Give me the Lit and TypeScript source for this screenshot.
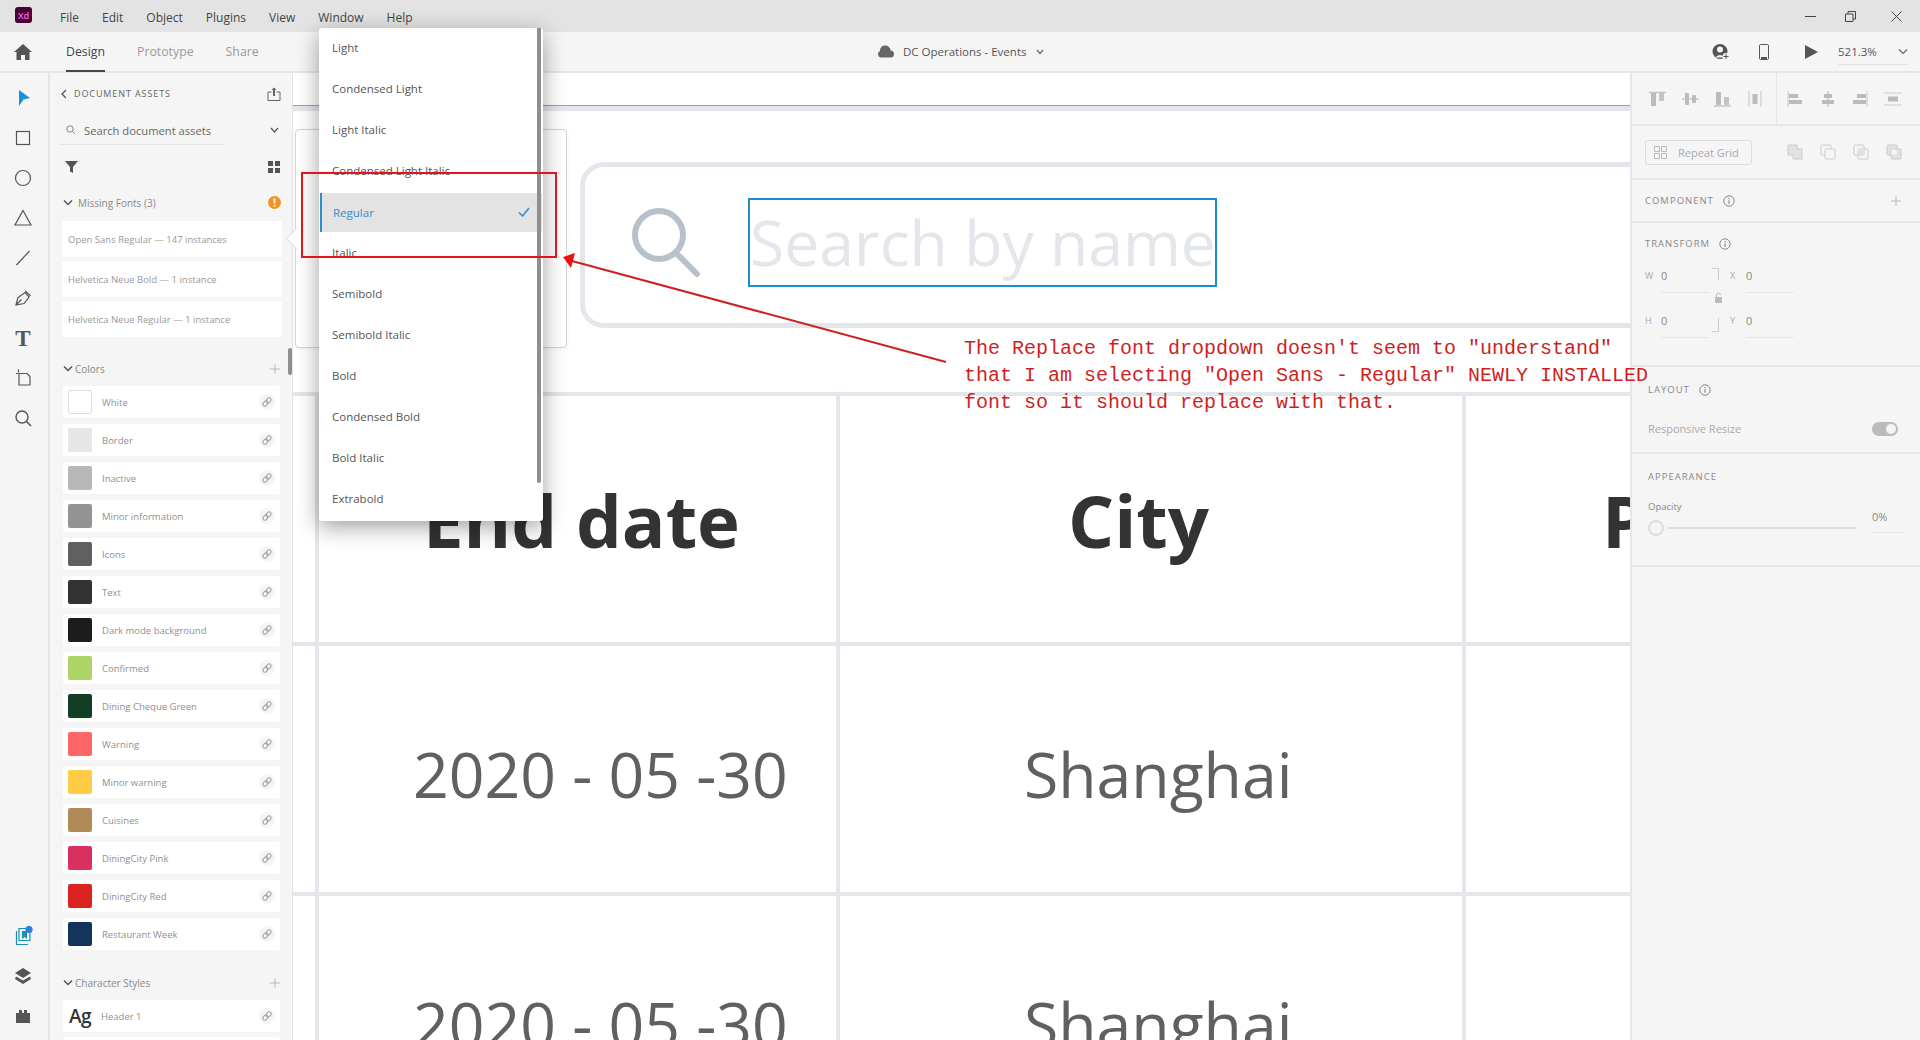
import { LitElement, html, svg, css } from "lit";
import { customElement } from "lit/decorators.js";

const I = (w: number, h: number, body: unknown) => html`<svg width=${w} height=${h} viewBox="0 0 ${w} ${h}" style="display:block;flex:none">${body}</svg>`;
const s = "fill:none;stroke:#555;stroke-width:1.2";

const colors: [string, string][] = [
  ["White", "#ffffff"], ["Border", "#e6e6e6"], ["Inactive", "#b8b8b8"], ["Minor information", "#949494"],
  ["Icons", "#606060"], ["Text", "#333333"], ["Dark mode background", "#1c1c1c"], ["Confirmed", "#aed468"],
  ["Dining Cheque Green", "#123e26"], ["Warning", "#ff6666"], ["Minor warning", "#ffcc47"], ["Cuisines", "#b08a56"],
  ["DiningCity Pink", "#d9305f"], ["DiningCity Red", "#dd2222"], ["Restaurant Week", "#12355b"],
];
const menu = ["File", "Edit", "Object", "Plugins", "View", "Window", "Help"];
const fonts = ["Open Sans Regular — 147 instances", "Helvetica Neue Bold — 1 instance", "Helvetica Neue Regular — 1 instance"];
const drop = ["Light", "Condensed Light", "Light Italic", "Condensed Light Italic", "Regular", "Italic", "Semibold", "Semibold Italic", "Bold", "Condensed Bold", "Bold Italic", "Extrabold"];

const link = html`<span class="link">${I(12, 12, svg`<g fill="none" stroke="#a2a2a2" stroke-width="1.100" transform="rotate(-45 6 6)"><rect x="1" y="4" width="5.500" height="4" rx="2"/><rect x="5.500" y="4" width="5.500" height="4" rx="2"/></g>`)}</span>`;
const chev = html`<span class="chev">${I(10, 8, svg`<path d="M1 1.500 5 5.500 9 1.500" fill="none" stroke="#555" stroke-width="1.500"/>`)}</span>`;
const plus = html`<span class="plus">${I(12, 12, svg`<path d="M6 1v10M1 6h10" stroke="#bbb" stroke-width="1.100"/>`)}</span>`;
const info = html`<span class="info">${I(12, 12, svg`<circle cx="6" cy="6" r="5.200" fill="none" stroke="#888" stroke-width="1"/><path d="M6 5.200v3.600M6 3v1.200" stroke="#888" stroke-width="1.200"/>`)}</span>`;

const railTop = [
  I(20, 20, svg`<path d="M6 2 17 10 10.500 11.500 6 18Z" fill="#1b8fd8"/>`),
  I(20, 20, svg`<rect x="3.500" y="3.500" width="13" height="13" style=${s}/>`),
  I(20, 20, svg`<circle cx="10" cy="10" r="7.500" style=${s}/>`),
  I(20, 20, svg`<path d="M10 2.500 18 17H2Z" style=${s}/>`),
  I(20, 20, svg`<path d="M3.500 17 16.500 3" style=${s}/>`),
  I(20, 20, svg`<path d="M3 17 5 9.500 12 4.500 16 9 11 15.500ZM3 17 8.500 11.500M12.500 3 17.500 8" style=${s}/>`),
  html`<span class="t">T</span>`,
  I(20, 20, svg`<path d="M6 5.500h8l3 3V17H6ZM3 5.500h2M5.500 1.500v3" style=${s}/>`),
  I(20, 20, svg`<circle cx="9" cy="9" r="6" fill="none" stroke="#555" stroke-width="1.400"/><path d="M13.500 13.500 18 18" stroke="#555" stroke-width="1.600"/>`),
];
const railBottom = [
  I(20, 20, svg`<path d="M6 2.500h11v12H6Z M3.500 5v13.500H15" fill="none" stroke="#1b8fb8" stroke-width="1.200"/><path d="M9 5h5v8l-2.500-2L9 13Z" fill="#1b8fb8"/><circle cx="16" cy="3.500" r="3.600" fill="#2b7fe0"/>`),
  I(20, 20, svg`<path d="M10 2 18 7 10 12 2 7Z" fill="#555"/><path d="M3 10.500 10 14.500 17 10.500 18 13 10 18 2 13Z" fill="#555"/>`),
  I(20, 20, svg`<path d="M3 17V7h3V4h3v3h2V4h3v3h3v10Z" fill="#555"/>`),
];
const alignL = [
  svg`<path d="M1 1.500h17" stroke="#c4c4c4" stroke-width="1.500"/><rect x="3" y="2" width="5" height="13" fill="#bbb"/><rect x="11" y="2" width="5" height="8" fill="#c4c4c4"/>`,
  svg`<path d="M1 8h17" stroke="#c4c4c4" stroke-width="1.500"/><rect x="4" y="2" width="4" height="12" rx="1" fill="#bbb"/><rect x="11" y="4" width="4" height="8" rx="1" fill="#bbb"/>`,
  svg`<path d="M1 15h17" stroke="#c4c4c4" stroke-width="1.500"/><rect x="3" y="1" width="5" height="13" fill="#bbb"/><rect x="11" y="6" width="5" height="8" fill="#c4c4c4"/>`,
  svg`<path d="M3 0v16M15 0v16" stroke="#ccc" stroke-width="1.200"/><rect x="6.500" y="3" width="5" height="10" fill="#bbb"/>`,
];
const alignR = [
  svg`<path d="M2 0v16" stroke="#ccc" stroke-width="1.200"/><rect x="3" y="3" width="9" height="4" fill="#bbb"/><rect x="3" y="9" width="13" height="4" fill="#bbb"/>`,
  svg`<path d="M9 0v16" stroke="#bbb" stroke-width="1.200"/><rect x="5" y="3" width="8" height="4" fill="#bbb"/><rect x="3" y="9" width="12" height="4" fill="#bbb"/>`,
  svg`<path d="M16 0v16" stroke="#ccc" stroke-width="1.200"/><rect x="6" y="3" width="9" height="4" fill="#bbb"/><rect x="2" y="9" width="13" height="4" fill="#bbb"/>`,
  svg`<path d="M0 2h18M0 14h18" stroke="#ccc" stroke-width="1.200"/><rect x="4" y="5.500" width="10" height="5" fill="#bbb"/>`,
];
const bools = [
  svg`<path d="M1 1h9v4h5v10H6v-4H1Z" fill="#e2e2e2" stroke="#ccc"/>`,
  svg`<rect x="1" y="1" width="10" height="10" rx="1" fill="none" stroke="#ccc"/><rect x="5" y="5" width="10" height="10" rx="1" fill="#f5f5f5" stroke="#ccc"/>`,
  svg`<rect x="1" y="1" width="10" height="10" rx="1" fill="none" stroke="#ccc"/><rect x="5" y="5" width="10" height="10" rx="1" fill="none" stroke="#ccc"/><rect x="5" y="5" width="6" height="6" fill="#e2e2e2"/>`,
  svg`<rect x="1" y="1" width="10" height="10" rx="1" fill="#e2e2e2" stroke="#ccc"/><rect x="5" y="5" width="10" height="10" rx="1" fill="#e2e2e2" stroke="#ccc"/><rect x="5.500" y="5.500" width="5" height="5" fill="#f5f5f5"/>`,
];

@customElement("app-root")
export class AppRoot extends LitElement {
  static styles = css`
    :host { display: block; position: relative; width: 1920px; height: 1040px; overflow: hidden; background: #f5f5f5; font-family: "Open Sans", sans-serif; color: #444; }
    .titlebar { height: 32px; background: #e3e3e3; display: flex; align-items: center; padding-left: 15px; }
    .logo { width: 17px; height: 16px; border-radius: 3px; background: #470137; color: #ff61f6; font-size: 9px; font-weight: 600; display: flex; align-items: center; justify-content: center; margin-right: 28px; margin-top: -2px; }
    .menu { display: flex; gap: 23px; font-size: 12px; color: #444; margin-top: 2px; }
    .winctl { margin-left: auto; display: flex; padding-right: 18px; align-items: center; }
    .g1 { width: 29px; } .g2 { width: 35px; }
    .tabbar { height: 39px; background: #f5f5f5; border-bottom: 2px solid #e6e6e6; display: flex; align-items: center; position: relative; box-sizing: content-box; }
    .home { margin-left: 14px; margin-right: 34px; }
    .tab { font-size: 12.300px; color: #999; margin-right: 32px; height: 39px; line-height: 39px; box-sizing: border-box; }
    .tab.on { color: #444; border-bottom: 2px solid #444; margin-top: 2px; line-height: 37px; }
    .doc { position: absolute; left: 877px; top: 0; height: 39px; display: flex; align-items: center; font-size: 11.500px; color: #555; gap: 9px; }
    .tools { margin-left: auto; display: flex; align-items: center; padding-right: 12px; }
    .zoomv { font-size: 11.500px; color: #555; width: 70px; height: 24px; line-height: 22px; border-bottom: 1px solid #e2e2e2; position: relative; box-sizing: border-box; margin-top: 2px; }
    .zoomv .chev { position: absolute; right: 0; top: 7px; }
    .main { display: flex; height: 967px; }
    .rail { width: 50px; border-right: 2px solid #e4e4e4; display: flex; flex-direction: column; padding: 5px 2px 4px 0; box-sizing: border-box; flex: none; }
    .rail .cell { height: 40px; display: flex; align-items: center; justify-content: center; flex: none; }
    .rail .spacer { flex: 1; }
    .t { font-family: "Liberation Serif", serif; font-weight: 700; font-size: 23px; color: #555; line-height: 1; }
    .assets { width: 243px; border-right: 1px solid #e4e4e4; position: relative; padding: 0 0 0 13px; box-sizing: border-box; flex: none; overflow: hidden; }
    .ahead { height: 41px; display: flex; align-items: center; font-size: 9px; letter-spacing: .9px; color: #666; gap: 7px; padding-right: 11px; margin-left: -2px; }
    .ahead .sh { margin-left: auto; }
    .asearch { height: 32px; display: flex; align-items: center; font-size: 11.200px; color: #666; padding: 0 13px 0 3px; position: relative; }
    .asearch .txt { margin-left: 9px; flex: 1; }
    .asearch .u { position: absolute; left: -3px; bottom: 1px; width: 164px; height: 1px; background: #e4e4e4; }
    .afilter { height: 42px; display: flex; align-items: center; justify-content: space-between; padding: 0 12px 0 2px; }
    .sect { display: flex; align-items: center; gap: 5px; font-size: 10px; color: #888; padding-right: 11px; box-sizing: border-box; }
    .sect .end { margin-left: auto; display: flex; }
    .sect .l { margin-left: -3px; }
    .sect.mf { height: 33px; padding-bottom: 4px; }
    .sect.col { height: 49px; padding-top: 15px; }
    .sect.chr { height: 50px; padding-top: 16px; }
    .fonts { display: flex; flex-direction: column; gap: 4px; margin: 0 10px 0 -1px; }
    .frow { height: 36px; background: #fff; border-radius: 2px; font-size: 9.500px; color: #999; display: flex; align-items: center; padding-left: 6px; }
    .rows { display: flex; flex-direction: column; gap: 6px; width: 217px; }
    .crow { height: 32px; flex: none; background: #fff; border-radius: 3px; display: flex; align-items: center; padding: 0 5px; box-sizing: border-box; font-size: 9.500px; color: #909090; }
    .sw { width: 24px; height: 24px; border-radius: 2px; margin-right: 10px; box-sizing: border-box; flex: none; }
    .sw.w { border: 1px solid #ddd; }
    .link { margin-left: auto; width: 16px; height: 16px; border-radius: 50%; background: #f5f5f5; display: flex; align-items: center; justify-content: center; }
    .ag { font-size: 19px; font-weight: 600; color: #333; width: 27px; margin-right: 5px; padding-left: 1px; letter-spacing: -.500px; }
    .thumb { position: absolute; left: 238px; top: 275px; width: 4px; height: 27px; border-radius: 2px; background: #8f8f8f; }
    .canvas { width: 1338px; flex: none; background: #fff; overflow: hidden; }
    .bluel { margin-top: 32px; height: 6px; box-sizing: border-box; border-top: 1.500px solid #7aa7dc; background: #e3e6ea; width: 100%; }
    .sbox { margin: 51px 0 0 287px; width: 1300px; height: 166px; border: 5px solid #e3e6ea; border-radius: 24px; box-sizing: border-box; display: flex; align-items: center; }
    .sglass { margin-left: 47px; margin-top: -4px; }
    .sfield { margin-left: 46px; width: 469px; height: 89px; border: 2px solid #1d8cc9; box-sizing: border-box; font-size: 62.500px; color: #e3e6ea; white-space: nowrap; margin-top: -6px; line-height: 84px; }
    .grid { margin-top: 64px; display: grid; grid-template-columns: 22px 517px 622px 200px; grid-auto-rows: 246px; gap: 4px; background: #e3e6ea; padding-top: 4px; height: 680px; overflow: hidden; }
    .c { background: #fff; display: flex; align-items: center; white-space: nowrap; overflow: hidden; font-size: 62.500px; color: #606060; line-height: 1.2; padding-top: 9px; box-sizing: border-box; }
    .c.b { font-size: 72.500px; font-weight: 700; color: #333; padding-top: 2px; }
    .panel { width: 288px; flex: none; border-left: 2px solid #e6e6e6; margin-left: -1px; box-sizing: content-box; }
    .sec { border-bottom: 2px solid #e6e6e6; box-sizing: content-box; position: relative; }
    .aligns { height: 51px; display: flex; }
    .aligns > div { display: flex; align-items: center; justify-content: space-between; box-sizing: border-box; }
    .aligns > div:first-child { width: 145px; padding: 0 12px 0 16px; border-right: 1px solid #e6e6e6; }
    .aligns > div:last-child { flex: 1; padding: 0 18px 0 9px; }
    .repeat { height: 52px; display: flex; align-items: center; padding: 0 18px 0 13px; }
    .rgbtn { width: 107px; height: 25px; border: 1px solid #ddd; border-radius: 3px; box-sizing: border-box; display: flex; align-items: center; gap: 11px; padding-left: 8px; font-size: 11px; color: #aaa; }
    .blist { margin-left: auto; display: flex; gap: 17px; }
    .lab { font-size: 9.500px; letter-spacing: 1px; color: #888; display: flex; align-items: center; gap: 9px; line-height: 13px; }
    .component { height: 41px; display: flex; align-items: center; padding: 0 18px 0 13px; justify-content: space-between; }
    .transform { height: 144px; padding: 14px 0 0 13px; box-sizing: border-box; }
    .tgrid { margin-top: 11px; display: grid; grid-template-columns: 85px 64px; row-gap: 13px; font-size: 11px; color: #888; position: relative; }
    .f { display: flex; align-items: center; gap: 7px; height: 32px; padding-bottom: 4px; box-sizing: border-box; position: relative; }
    .f b { font-weight: 400; font-size: 9px; color: #aaa; width: 9px; }
    .f::after { content: ""; position: absolute; left: 16px; bottom: 0; height: 1px; background: #e6e6e6; width: 48px; }
    .lock { position: absolute; left: 66px; top: 7px; width: 16px; height: 64px; }
    .layout { height: 87px; padding: 16px 22px 0 16px; box-sizing: border-box; }
    .rr { margin-top: 25px; display: flex; align-items: center; justify-content: space-between; font-size: 11px; color: #aaa; }
    .tog { width: 26px; height: 14px; border-radius: 7px; background: #bbb; position: relative; }
    .tog::after { content: ""; position: absolute; right: 2px; top: 2px; width: 10px; height: 10px; border-radius: 50%; background: #f5f5f5; }
    .appear { height: 113px; padding: 16px 22px 0 16px; box-sizing: border-box; }
    .oplab { font-size: 9.500px; color: #888; margin-top: 17px; line-height: 13px; }
    .oprow { display: flex; align-items: center; margin-top: 4px; height: 22px; position: relative; }
    .knob { width: 16px; height: 16px; border-radius: 50%; border: 2px solid #ddd; box-sizing: border-box; flex: none; margin-right: 4px; background: #f5f5f5; }
    .tr { width: 188px; height: 2px; background: #ddd; flex: none; }
    .op { position: absolute; left: 224px; top: -12px; width: 32px; height: 28px; line-height: 24px; border-bottom: 1px solid #e6e6e6; font-size: 11px; color: #888; box-sizing: border-box; }
    .card { position: absolute; left: 295px; top: 129px; width: 272px; height: 219px; background: #fff; border: 1px solid #d4d4d4; border-radius: 4px; box-sizing: border-box; box-shadow: 0 1px 6px rgba(0,0,0,.05); }
    .caret { position: absolute; left: -7px; top: 101px; width: 14px; height: 14px; background: #fff; border-left: 1px solid #ddd; border-bottom: 1px solid #ddd; transform: rotate(45deg); }
    .dd { position: absolute; left: 319px; top: 28px; width: 224px; height: 493px; background: #fff; border-radius: 3px; box-shadow: 0 6px 22px rgba(0,0,0,.38); overflow: hidden; }
    .di { height: 41px; display: flex; align-items: center; padding: 0 0 3px 13px; font-size: 11.500px; color: #555; position: relative; box-sizing: border-box; }
    .di.sel { color: #2b8fce; background: #e3e3e3; border-left: 2px solid #2b8fce; padding-left: 11px; margin: 1px; height: 39px; padding-bottom: 1px; }
    .di .ck { position: absolute; right: 12px; top: 14px; }
    .ddbar { position: absolute; right: 2px; top: 0; width: 4px; height: 455px; background: #8f8f8f; border-radius: 0 0 2px 2px; }
    .anno { position: absolute; left: 0; top: 0; pointer-events: none; }
    .note { position: absolute; left: 964px; top: 335px; font-family: "Liberation Mono", monospace; font-size: 20px; line-height: 27px; color: #cf1f1f; white-space: pre; }
  `;

  render() {
    const alignRow = (list: unknown[]) => list.map((b) => I(18, 16, b));
    return html`
      <div class="titlebar">
        <div class="logo">Xd</div>
        <div class="menu">${menu.map((m) => html`<span>${m}</span>`)}</div>
        <div class="winctl">
          ${I(11, 11, svg`<path d="M0 5.500h11" stroke="#444"/>`)}
          <span class="g1"></span>
          ${I(11, 11, svg`<path d="M.5 3h7.500v7.500H.5ZM3 3V.5h7.500V8H8" fill="none" stroke="#444"/>`)}
          <span class="g2"></span>
          ${I(11, 11, svg`<path d="M.5.5l10 10M10.500.5l-10 10" stroke="#444"/>`)}
        </div>
      </div>
      <div class="tabbar">
        <div class="home">${I(18, 16, svg`<path d="M9 0 18 8h-2.500v8h-4.500v-5H7v5H2.500V8H0Z" fill="#555"/>`)}</div>
        <div class="tab on">Design</div><div class="tab">Prototype</div><div class="tab">Share</div>
        <div class="doc">
          ${I(17, 13, svg`<path d="M3.500 12.500A3.500 3.500 0 0 1 3 6 5 5 0 0 1 8.500.5 5 5 0 0 1 13.500 5.500 3.500 3.500 0 0 1 13.500 12.500Z" fill="#666"/>`)}
          <span>DC Operations - Events</span>
          ${I(10, 8, svg`<path d="M2 2 5 5.500 8 2" fill="none" stroke="#666" stroke-width="1.200"/>`)}
        </div>
        <div class="tools">
          ${I(18, 16, svg`<circle cx="8" cy="7.500" r="7.500" fill="#555"/><circle cx="8" cy="5.500" r="3" fill="#f5f5f5"/><path d="M3.500 13.500a5 4.500 0 0 1 9 0Z" fill="#f5f5f5"/><circle cx="14" cy="12.500" r="3.500" fill="#f5f5f5"/><path d="M11.500 12.500h5M14 10v5" stroke="#555"/>`)}
          <span style="width:29px"></span>
          ${I(10, 16, svg`<rect x=".5" y=".5" width="9" height="15" rx="1" fill="#f5f5f5" stroke="#555"/><rect x="2" y="13" width="6" height="2" fill="#555"/>`)}
          <span style="width:36px"></span>
          ${I(13, 14, svg`<path d="M0 0 13 7 0 14Z" fill="#555"/>`)}
          <span style="width:20px"></span>
          <div class="zoomv">521.3%<span class="chev">${I(10, 8, svg`<path d="M1 1.500 5 5.500 9 1.500" fill="none" stroke="#666" stroke-width="1.200"/>`)}</span></div>
        </div>
      </div>
      <div class="main">
        <div class="rail">
          ${railTop.map((i) => html`<div class="cell">${i}</div>`)}
          <div class="spacer"></div>
          ${railBottom.map((i) => html`<div class="cell">${i}</div>`)}
        </div>
        <div class="assets">
          <div class="ahead">
            ${I(6, 10, svg`<path d="M5 1 1 5l4 4" fill="none" stroke="#555" stroke-width="1.300"/>`)}
            <span>DOCUMENT ASSETS</span>
            <span class="sh">${I(14, 14, svg`<path d="M1 5v8.500h12V5M1 5h3.500M13 5H9.500" fill="none" stroke="#666"/><path d="M4.500 3 7 .5 9.500 3Z" fill="#666"/><rect x="6" y="3" width="2" height="6" fill="#666"/>`)}</span>
          </div>
          <div class="asearch">
            ${I(9, 10, svg`<circle cx="4" cy="4" r="3.200" fill="none" stroke="#888"/><path d="M6.500 6.500 9 9" stroke="#888"/>`)}
            <span class="txt">Search document assets</span>
            ${I(9, 7, svg`<path d="M1 1 4.500 5 8 1" fill="none" stroke="#555" stroke-width="1.200"/>`)}
            <div class="u"></div>
          </div>
          <div class="afilter">
            ${I(13, 12, svg`<path d="M0 0h13L8 6v6L5 10.500V6Z" fill="#555"/>`)}
            ${I(12, 12, svg`<path d="M0 0h5v5H0ZM7 0h5v5H7ZM0 7h5v5H0ZM7 7h5v5H7Z" fill="#555"/>`)}
          </div>
          <div class="sect mf">${chev}<span>Missing Fonts (3)</span>
            <span class="end">${I(13, 13, svg`<circle cx="6.500" cy="6.500" r="6.500" fill="#f29423"/><path d="M6.500 2.500v5M6.500 9v1.500" stroke="#fff" stroke-width="1.800"/>`)}</span></div>
          <div class="fonts">${fonts.map((f) => html`<div class="frow">${f}</div>`)}</div>
          <div class="sect col">${chev}<span class="l">Colors</span><span class="end">${plus}</span></div>
          <div class="rows">
            ${colors.map(([n, c]) => html`<div class="crow"><span class="sw ${c === "#ffffff" ? "w" : ""}" style="background:${c}"></span>${n}${link}</div>`)}
          </div>
          <div class="sect chr">${chev}<span class="l">Character Styles</span><span class="end">${plus}</span></div>
          <div class="rows" style="gap:5px">
            <div class="crow"><span class="ag">Ag</span>Header 1${link}</div>
            <div class="crow"></div>
          </div>
          <div class="thumb"></div>
        </div>
        <div class="canvas">
          <div class="bluel"></div>
          <div class="sbox">
            <div class="sglass">${I(70, 70, svg`<circle cx="27" cy="27" r="24" fill="none" stroke="#b8c0cb" stroke-width="6"/><path d="M44 45 65 66" stroke="#b8c0cb" stroke-width="6" stroke-linecap="round"/>`)}</div>
            <div class="sfield">Search by name</div>
          </div>
          <div class="grid">
            <div class="c"></div><div class="c b" style="padding-left:104px">End date</div><div class="c b" style="padding-left:228px">City</div><div class="c b" style="padding-left:136px">Price</div>
            <div class="c"></div><div class="c" style="padding-left:94px">2020 - 05 -30</div><div class="c" style="padding-left:184px">Shanghai</div><div class="c"></div>
            <div class="c"></div><div class="c" style="padding-left:94px">2020 - 05 -30</div><div class="c" style="padding-left:184px">Shanghai</div><div class="c"></div>
          </div>
        </div>
        <div class="panel">
          <div class="sec aligns"><div>${alignRow(alignL)}</div><div>${alignRow(alignR)}</div></div>
          <div class="sec repeat">
            <div class="rgbtn">${I(13, 13, svg`<path d="M.5.5h5v5h-5ZM7.500.5h5v5h-5ZM.5 7.500h5v5h-5ZM7.500 7.500h5v5h-5Z" fill="none" stroke="#bbb"/>`)}Repeat Grid</div>
            <div class="blist">${bools.map((b) => I(16, 16, b))}</div>
          </div>
          <div class="sec component"><span class="lab">COMPONENT ${info}</span>${plus}</div>
          <div class="sec transform">
            <span class="lab">TRANSFORM ${info}</span>
            <div class="tgrid">
              <div class="f"><b>W</b>0</div><div class="f"><b>X</b>0</div>
              <div class="f"><b>H</b>0</div><div class="f"><b>Y</b>0</div>
              <div class="lock">${I(16, 64, svg`<path d="M1 .5h6.500V12M1 63.500h6.500V50" fill="none" stroke="#ccc"/><rect x="4" y="29" width="7" height="6" fill="#bbb"/><path d="M5.500 29v-2a2 2 0 0 1 4 0" fill="none" stroke="#bbb"/>`)}</div>
            </div>
          </div>
          <div class="sec layout"><span class="lab">LAYOUT ${info}</span>
            <div class="rr"><span>Responsive Resize</span><span class="tog"></span></div></div>
          <div class="sec appear"><span class="lab">APPEARANCE</span>
            <div class="oplab">Opacity</div>
            <div class="oprow"><span class="knob"></span><span class="tr"></span><span class="op">0%</span></div></div>
        </div>
      </div>

      <div class="card"><div class="caret"></div></div>
      <div class="dd">
        ${drop.map((d) => html`<div class="di ${d === "Regular" ? "sel" : ""}">${d}
          ${d === "Regular" ? html`<span class="ck">${I(12, 10, svg`<path d="M1 5.500 4.500 9 11 1" fill="none" stroke="#2b8fce" stroke-width="1.500"/>`)}</span>` : ""}</div>`)}
        <div class="ddbar"></div>
      </div>
      <svg class="anno" width="1920" height="1040" viewBox="0 0 1920 1040">
        <rect x="302" y="173" width="254" height="84" fill="none" stroke="#e0161e" stroke-width="2"/>
        <path d="M946 362 572 261" stroke="#cf1f1f" stroke-width="2"/>
        <path d="M563 257 575 253 571 268Z" fill="#ee1111"/>
      </svg>
      <div class="note">The Replace font dropdown doesn't seem to "understand"
that I am selecting "Open Sans - Regular" NEWLY INSTALLED
font so it should replace with that.</div>
    `;
  }
}
